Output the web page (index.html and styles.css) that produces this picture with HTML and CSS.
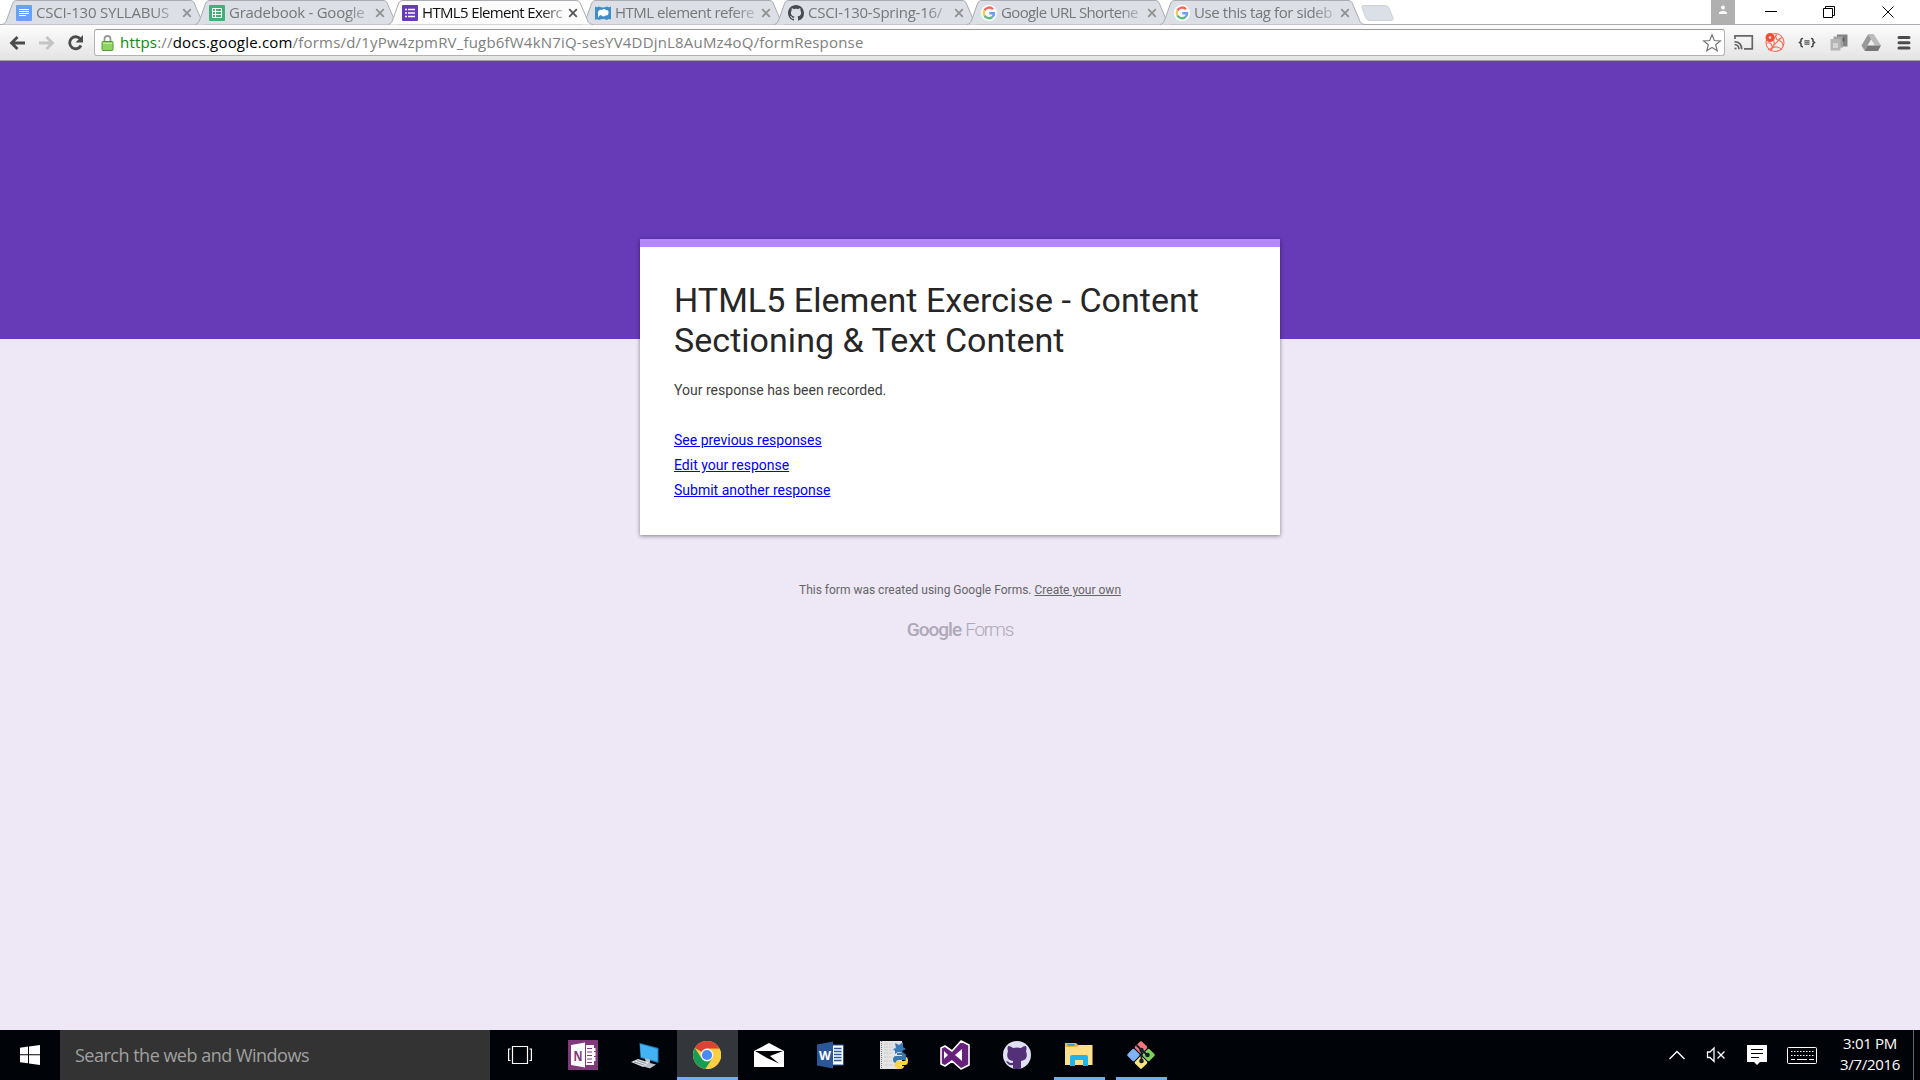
FILE: index.html
```html
<!DOCTYPE html>
<html lang="en">
<head>
<meta charset="utf-8">
<title>HTML5 Element Exercise - Content Sectioning &amp; Text Content</title>
<link rel="stylesheet" href="styles.css">
</head>
<body>
<svg class="defs" width="0" height="0" aria-hidden="true">
  <defs>
    <symbol id="tab" viewBox="0 0 206 25"><path d="M0 24.5C3 24 4 22 5 19L10 5C11 2 12 .5 15 .5H188C191 .5 192 2 193 5L199 19C200 22 201 24 205 24.5"/></symbol>
    <symbol id="x" viewBox="0 0 10 10"><path d="M1.2 1.2 8.8 8.8M8.8 1.2 1.2 8.8" stroke="currentColor" stroke-width="1.8"/></symbol>
    <symbol id="g" viewBox="0 0 16 16"><circle cx="8" cy="8" r="8" fill="#fff"/><g fill="none" stroke-width="2.4"><path d="M12 4.3A5.2 5.2 0 0 0 3.4 5.6" stroke="#f0665c"/><path d="M3.4 5.6a5.2 5.2 0 0 0 0 4.9" stroke="#f8cc50"/><path d="M3.4 10.5a5.2 5.2 0 0 0 8 1.5" stroke="#5fbb78"/><path d="M11.4 12A5.2 5.2 0 0 0 13 8.2H8.3" stroke="#6c9ff7"/></g></symbol>
    <symbol id="cat" viewBox="0 0 16 16"><path d="M8 0C3.58 0 0 3.58 0 8c0 3.54 2.29 6.53 5.47 7.59.4.07.55-.17.55-.38 0-.19-.01-.82-.01-1.49-2.01.37-2.53-.49-2.69-.94-.09-.23-.48-.94-.82-1.13-.28-.15-.68-.52-.01-.53.63-.01 1.08.58 1.23.82.72 1.21 1.87.87 2.33.66.07-.52.28-.87.51-1.07-1.78-.2-3.64-.89-3.64-3.95 0-.87.31-1.59.82-2.15-.08-.2-.36-1.02.08-2.12 0 0 .67-.21 2.2.82.64-.18 1.32-.27 2-.27s1.36.09 2 .27c1.53-1.04 2.2-.82 2.2-.82.44 1.1.16 1.92.08 2.12.51.56.82 1.27.82 2.15 0 3.07-1.87 3.75-3.65 3.95.29.25.54.73.54 1.48 0 1.07-.01 1.93-.01 2.2 0 .21.15.46.55.38A8.01 8.01 0 0 0 16 8c0-4.42-3.58-8-8-8z"/></symbol>
  </defs>
</svg>

<header class="strip">
  <div class="tabs">
    <div class="tab"><svg class="shape"><use href="#tab"/></svg>
      <svg class="fav" viewBox="0 0 16 16"><rect width="16" height="16" rx="1" fill="#6a9ff5"/><path d="M3 4.500h10M3 6.500h10M3 8.500h10M3 10.500h7" stroke="#fff"/></svg>
      <span class="name t1">CSCI-130 SYLLABUS</span><svg class="close"><use href="#x"/></svg></div>
    <div class="tab"><svg class="shape"><use href="#tab"/></svg>
      <svg class="fav" viewBox="0 0 16 16"><rect width="16" height="16" rx="1" fill="#43b079"/><path d="M3.500 3.500h9v9h-9zM3.500 6.500h9M3.500 9.500h9M6.500 3.500v9" fill="none" stroke="#fff"/></svg>
      <span class="name t2">Gradebook - Google</span><svg class="close"><use href="#x"/></svg></div>
    <div class="tab active"><svg class="shape"><use href="#tab"/></svg>
      <svg class="fav" viewBox="0 0 16 16"><rect width="16" height="16" rx="1" fill="#673ab7"/><path d="M3 4.500h2M6 4.500h7M3 8h2M6 8h7M3 11.500h2M6 11.500h7" stroke="#fff" stroke-width="1.600"/></svg>
      <span class="name t3">HTML5 Element Exerc</span><svg class="close"><use href="#x"/></svg></div>
    <div class="tab"><svg class="shape"><use href="#tab"/></svg>
      <svg class="fav" viewBox="0 0 16 16"><path d="M0 1.500q2 1.500 4 0 4 2 8 0 2 1.500 4 0v13q-2-1-4 .5-4-2-8 0-2-1.500-4 0z" fill="#3f8fc6"/><path d="M3 13V7q1-3 4-2 2-2 4 0 3 0 2.500 3 0 3-3 2.500Q8 12.500 6 10q-2 0-3 3z" fill="#fff"/></svg>
      <span class="name t4">HTML element refere</span><svg class="close"><use href="#x"/></svg></div>
    <div class="tab"><svg class="shape"><use href="#tab"/></svg>
      <svg class="fav" fill="#484b50"><use href="#cat"/></svg>
      <span class="name t5">CSCI-130-Spring-16/</span><svg class="close"><use href="#x"/></svg></div>
    <div class="tab"><svg class="shape"><use href="#tab"/></svg>
      <svg class="fav"><use href="#g"/></svg>
      <span class="name t6">Google URL Shortene</span><svg class="close"><use href="#x"/></svg></div>
    <div class="tab"><svg class="shape"><use href="#tab"/></svg>
      <svg class="fav"><use href="#g"/></svg>
      <span class="name t7">Use this tag for sideb</span><svg class="close"><use href="#x"/></svg></div>
  </div>
  <svg class="newtab" viewBox="0 0 34 16"><path d="M3 .5H24Q27 .5 28 3L32 13Q33 15.500 30 15.500H9Q6 15.500 5 13L1 3Q0 .5 3 .5z" fill="#dae0e6" stroke="#cdd2d8"/></svg>
  <div class="profile"><svg width="10" height="10" viewBox="0 0 10 10" fill="#fff"><circle cx="5" cy="2.500" r="2"/><path d="M1 9V7.500Q5 4 9 7.500V9z"/></svg></div>
  <svg class="winbtns" width="185" height="24" fill="none" stroke="#000"><path d="M30 11.500h12M88.500 8.500h9v9h-9zM90.500 8.500V6.500h9v9h-2M147.500 6.500l11 11M158.500 6.500l-11 11"/></svg>
</header>

<div class="toolbar">
  <svg class="nav" width="94" height="35" fill="none" stroke-width="2.800"><path d="M25 18H12M17.500 12l-6 6 6 6" stroke="#4c4c4c"/><path d="M39 18h13M46.500 12l6 6-6 6" stroke="#c4c4c4"/><path d="M80.500 14.200A6 6 0 1 0 81 20.500" stroke="#4c4c4c"/><path d="M83 10v7.500h-7.500z" fill="#4c4c4c" stroke="none"/></svg>
  <div class="omnibox">
    <svg class="lock" width="13" height="16" viewBox="0 0 13 16"><path d="M3.500 8V4a3 3 0 0 1 6 0v4" fill="none" stroke="#999" stroke-width="1.800"/><rect x="1" y="6.500" width="11" height="9" rx="1" fill="#8fd460" stroke="#55993a"/><path d="M2 8.500h9" stroke="#bceb9b"/></svg>
    <span class="url"><b>https</b>://<i>docs.google.com</i>/forms/d/1yPw4zpmRV_fugb6fW4kN7iQ-sesYV4DDjnL8AuMz4oQ/formResponse</span>
    <svg class="star" width="20" height="20" viewBox="0 0 20 20"><path d="M10 1.800l2.300 5.700 6.100.4-4.700 3.900 1.500 6L10 14.500l-5.200 3.300 1.500-6L1.600 7.900l6.100-.4z" fill="#fff" stroke="#777" stroke-width="1.200"/></svg>
  </div>
  <svg class="ext" width="194" height="35" viewBox="1725 25 194 35">
    <g fill="none" stroke="#666" stroke-width="1.700"><path d="M1735 39v-3.200h17.300v13H1744M1734.500 41.700q7 .3 7.200 7.500M1734.500 44.500q4.300.3 4.500 4.700"/><path d="M1734.500 48.500h2"/></g>
    <g fill="none" stroke="#f2705c" stroke-width="1.100"><circle cx="1775" cy="42.500" r="9"/><path d="M1768 50q7-3 6-8t3-7M1770 51q3-5 7-4t5 3M1776 34.500q-1 5 3 6t4 6M1767 43q4-1 5 3t-2 5M1778 41q2-4 4-3M1773 46l8-8"/><circle cx="1770" cy="37.500" r="2.900" fill="#fae3de" stroke="#f04e35" stroke-width="3.200"/></g>
    <path d="M1803 38.500q-2-.2-2 1.500v1.300l-1.500 1.200 1.500 1.200v1.500q0 1.700 2 1.500M1811 38.500q2-.2 2 1.500v1.300l1.500 1.200-1.500 1.200v1.500q0 1.700-2 1.500" fill="none" stroke="#444" stroke-width="1.500"/><path d="M1804.500 40h5v5h-5z" fill="#777"/><path d="M1804 41.500h6M1804 43.500h6" stroke="#bbb" stroke-width=".6"/>
    <path d="M1837 34.500h10.500v12h-10.500z" fill="#838383"/><path d="M1833.500 36.500h9.500v11h-9.500z" fill="#a3a3a3"/><path d="M1830.500 39h10v11.500h-10z" fill="#b5b5b5"/><path d="M1833 43h5v5h-5z" fill="#d4d4d4"/><path d="M1843.500 37.500v4" stroke="#5f5f5f" stroke-width="2"/>
    <path d="M1868 34.500h6l-6.500 11-3 5-3-5z" fill="#999"/><path d="M1868 34.500h6l7 11h-6z" fill="#bbb"/><path d="M1867.500 45.500H1881l-3 5.500h-13.500z" fill="#777"/>
    <path d="M1899 37.500h10M1899 42.700h10M1899 47.900h10" stroke="#4c4c4c" stroke-width="3" stroke-linecap="round"/>
  </svg>
</div>

<main class="page">
  <section class="card">
    <h1>HTML5 Element Exercise - Content Sectioning &amp; Text Content</h1>
    <p>Your response has been recorded.</p>
    <nav><a href="#">See previous responses</a><a href="#">Edit your response</a><a href="#">Submit another response</a></nav>
  </section>
  <p class="made">This form was created using Google Forms. <a href="#">Create your own</a></p>
  <div class="logo"><span class="google">Google</span><span class="forms">Forms</span></div>
</main>

<footer class="taskbar">
  <div class="start"><svg width="20" height="20" viewBox="0 0 20 20" fill="#fff"><path d="M0 2.700l8-1.100v7.700H0zM9 1.400L20 0v9.300H9zM0 10.300h8v8L0 17.200zM9 10.300h11V20L9 18.500z"/></svg></div>
  <div class="search"><span>Search the web and Windows</span></div>
  <div class="apps">
    <div class="app"><svg width="26" height="20" viewBox="0 0 26 20" fill="none" stroke="#fff" stroke-width="1.200"><path d="M4.500 1.500h15v17h-15zM2.500 4H.6v11.500h1.900M21.500 4h1.900v11.500h-1.900"/></svg></div>
    <div class="app"><svg width="30" height="30" viewBox="0 0 30 30"><path d="M0 0h30v30H0z" fill="#80397b"/><path d="M3 5l14-2.500v25L3 25zM18 5h8v3h1.500v3H26v1h1.500v4H26v1h1.500v4H26v4h-8z" fill="#fff"/><path d="M19 8.500h5M19 12h5M19 15.500h5M19 19h5M19 22.500h5" stroke="#80397b"/><text x="5.500" y="20.500" font-size="15" font-weight="700" fill="#80397b" textLength="9" lengthAdjust="spacingAndGlyphs">N</text></svg></div>
    <div class="app"><svg width="30" height="30" viewBox="0 0 30 30"><path d="M9.500 3l19 5v15l-18-5z" fill="#247db5"/><path d="M10 4l17.500 5v12.500L11 17z" fill="#42b4f5"/><path d="M15 18l5 1.500v3.500l6 1.500-6 4-8-2.500 4-2z" fill="#b9c2c8"/><path d="M1 22l7-3 11 3.500L13 27z" fill="#dce1e4"/><path d="M4 22l10 3M7 20.500l9 3" stroke="#8a969d"/></svg></div>
    <div class="app current"><svg width="28" height="28" viewBox="0 0 28 28"><circle cx="14" cy="14" r="14" fill="#ffce43"/><path d="M14 14L1.900 7A14 14 0 0 1 26.500 7.700H14z" fill="#da4436"/><path d="M1.900 7A14 14 0 0 0 12.500 27.900L19.500 17.200 14 14 8.500 17.200z" fill="#179c57"/><path d="M14 7.700h12.500A14 14 0 0 1 12.500 28l7-10.800z" fill="#ffce43"/><circle cx="14" cy="14" r="6.400" fill="#f4f4f4"/><circle cx="14" cy="14" r="5.100" fill="#4a8af4"/></svg></div>
    <div class="app"><svg width="30" height="26" viewBox="0 0 30 26"><path d="M0 9L15 1l15 8v16H0z" fill="#fff"/><path d="M1 9h28l-13 5 9 7.500-12-5.500z" fill="#000308"/></svg></div>
    <div class="app"><svg width="28" height="28" viewBox="0 0 28 28"><path d="M15 4h11.500v20H15z" fill="#fff" stroke="#2b5797"/><path d="M17 7.500h7.500M17 10.500h7.500M17 13.500h7.500M17 16.500h7.500M17 19.500h7.500" stroke="#2b5797" stroke-width="1.400"/><path d="M0 3.500L16 .5v27l-16-3z" fill="#2b5797"/><text x="2" y="18.500" font-size="13" font-weight="700" fill="#fff" textLength="12" lengthAdjust="spacingAndGlyphs">W</text></svg></div>
    <div class="app"><svg width="30" height="30" viewBox="0 0 30 30"><path d="M2 1h22v26l-3 2H2z" fill="#e4e4e4"/><path d="M3.500 1v28" stroke="#777" stroke-dasharray="1 1"/><path d="M6 4h15M6 7h13M6 10h14M6 13h8M6 17h7M6 21h8M6 25h12" stroke="#ccc" stroke-dasharray="4 1"/><path d="M17 3l4 2 4-3v5l3 2-4 2 2 2-6-1-3 2v-3l-2-2 3-1z" fill="#367bb5"/><path d="M19 13h6q3 0 3 3v4h-7q-3 0-3 3-3 0-3-3.500t3-3.500h6v-1h-5z" fill="#3979ae"/><path d="M28 17q2 0 2 4t-3 4h-5v1h4q0 3-4 3-5 0-5-3v-2q0-3 4-3h5q2 0 2-2z" fill="#ffd343"/></svg></div>
    <div class="app"><svg width="30" height="30" viewBox="0 0 30 30"><path d="M21 1l8 4v20l-8 4-9-8-7 5-4-2V8l4-2 7 5z" fill="#68217a" stroke="#fff" stroke-width="1.600" stroke-linejoin="round"/><path d="M22 9v12l-7-6zM4 11l4 4-4 4z" fill="#fff"/></svg></div>
    <div class="app"><svg width="28" height="28" viewBox="0 0 28 28"><circle cx="14" cy="14" r="14" fill="#dfe0f2"/><path d="M5 5q3 0 5 2 4-1 8 0 2-2 5-2 1 3 0 5 3 9-5 10v7.500q-4 1-8 0V24q-5 1-7-4 2 0 4 2l3-.3V20Q2 19 5 10q-1-2 0-5z" fill="#533078"/></svg></div>
    <div class="app open"><svg width="28" height="26" viewBox="0 0 28 26"><path d="M0 1h11l2 2h14v4H0z" fill="#e9b84a"/><path d="M2.500 2h7v2h-7z" fill="#2ca7e0"/><path d="M0 5h12l2-2h13.500v20H0z" fill="#fee08b"/><path d="M5 24V15q0-2 2-2h14q2 0 2 2v9h-5v-6h-8v6z" fill="#1eb5ee"/></svg></div>
    <div class="app open"><svg width="30" height="30" viewBox="0 0 30 30"><g transform="rotate(45 15 15)"><rect x="4.800" y="4.800" width="9.700" height="9.700" rx="1.500" fill="#f6767d"/><rect x="4.800" y="15.500" width="9.700" height="9.700" rx="1.500" fill="#80b3ff"/><rect x="15.500" y="4.800" width="9.700" height="9.700" rx="1.500" fill="#80d25b"/><rect x="15.500" y="15.500" width="9.700" height="9.700" rx="1.500" fill="#ffe57f"/></g><path d="M10 4.500l5.500 5.500v11M15.500 10l6 5" stroke="#10202c" stroke-width="1.800" fill="none"/><circle cx="15.500" cy="10" r="2.200" fill="#10202c"/><circle cx="15.500" cy="21" r="2.300" fill="#10202c"/><circle cx="21.500" cy="15" r="2.300" fill="#10202c"/></svg></div>
  </div>
  <svg class="tray" width="160" height="50" viewBox="1660 1030 160 50" fill="none" stroke="#fff">
    <path d="M1669.500 1059l7.500-7.500 7.500 7.500" stroke-width="1.400"/>
    <path d="M1707.500 1052h2.500l4-4v13.500l-4-4h-2.500zM1717.500 1051.500l7 7M1724.500 1051.500l-7 7" stroke-width="1.300"/>
    <path d="M1747 1045h20v17h-7l-3 3-3-3h-7z" fill="#fff" stroke="none"/><path d="M1751 1049.500h12M1751 1053.500h12M1751 1057.500h8" stroke="#000"/>
    <rect x="1787.500" y="1047.500" width="29" height="16" rx="1"/><path d="M1791 1051.500h23M1791 1055.500h23" stroke-dasharray="1.500 1.500"/><path d="M1791 1059.500h4M1797 1059.500h10M1809 1059.500h5"/>
  </svg>
  <div class="clock"><span class="time">3:01 PM</span><span class="date">3/7/2016</span></div>
</footer>
</body>
</html>
```
FILE: styles.css
```css
* { box-sizing: border-box; }
body { margin: 0; width: 1920px; height: 1080px; overflow: hidden; display: flex; flex-direction: column; font-family: "Open Sans", "Noto Sans", sans-serif; background: #ede7f6; }
.defs { position: absolute; }
svg { display: block; flex: none; }

.strip { height: 24px; flex: none; display: flex; background: #fff; position: relative; z-index: 1; }
.tabs { display: flex; padding-left: 2px; }
.tab { position: relative; width: 193px; height: 24px; display: flex; align-items: center; padding-left: 14px; color: #777; }
.shape { position: absolute; left: 0; top: 0; width: 206px; height: 25px; fill: #dce0e6; stroke: #a9acb0; }
.active { z-index: 1; color: #111; }
.active .shape { fill: #fcfcfc; }
.fav { position: relative; width: 16px; height: 16px; margin-top: 1px; }
.name { position: relative; width: 144px; margin-left: 4px; font-size: 15px; line-height: 23px; white-space: nowrap; -webkit-mask-image: linear-gradient(90deg, #000 118px, rgba(0,0,0,.3) 141px); mask-image: linear-gradient(90deg, #000 118px, rgba(0,0,0,.3) 141px); letter-spacing: -.65px; }
.t1 { letter-spacing: -.2px; }
.t2, .t5 { letter-spacing: -.25px; }
.t4 { letter-spacing: -.5px; }
.t7 { letter-spacing: -.42px; }
.close { position: relative; width: 10px; height: 10px; margin: 2px 0 0 2px; color: #919191; }
.active .close { color: #555; }
.newtab { width: 34px; height: 16px; margin: 5px 0 0 8px; }
.profile { width: 24px; height: 24px; margin-left: auto; background: #b0b0b0; display: flex; justify-content: center; padding-top: 5px; }

.toolbar { height: 37px; flex: none; display: flex; align-items: flex-start; background: linear-gradient(#fcfcfc, #e4e4e4); border-top: 1px solid #a9acb0; border-bottom: 1px solid #a3a0a8; }
.omnibox { width: 1631px; height: 27px; margin-top: 4px; display: flex; align-items: center; background: #fff; border: 1px solid #b3b3b3; border-top-color: #999; border-radius: 3px; padding: 0 2px 0 6px; }
.url { margin: -2px 0 0 6px; font-size: 15px; line-height: 24px; white-space: nowrap; color: #808080; letter-spacing: .19px; }
.url b { font-weight: 400; color: #0b8a0b; }
.url i { font-style: normal; color: #000; }
.star { margin-left: auto; }

.page { flex: 1; display: flex; flex-direction: column; align-items: center; padding-top: 178px; background: linear-gradient(#673ab7 278px, #ede7f6 278px); font-family: Roboto, sans-serif; }
.card { width: 640px; height: 296px; background: #fff; border-top: 8px solid #b388ff; box-shadow: 0 1px 4px rgba(0,0,0,.45); padding: 33px 34px 0; }
h1 { margin: 0; font-size: 34px; line-height: 40px; font-weight: 400; color: #262626; letter-spacing: .04px; }
p { margin: 0; }
.card p { margin-top: 20px; font-size: 14px; line-height: 20px; color: #404040; letter-spacing: .02px; }
nav { margin-top: 28px; display: flex; flex-direction: column; align-items: flex-start; font-size: 14px; line-height: 25px; }
nav a { color: #00e; }
.made { margin-top: 47px; font-size: 12px; line-height: 16px; color: #666; }
.made a { color: inherit; }
.logo { margin-top: 20px; display: flex; gap: 4px; font-size: 19px; line-height: 24px; color: #aea8b8; }
.google { font-weight: 500; letter-spacing: -1px; }
.forms { letter-spacing: -1.2px; font-weight: 300; }

.taskbar { height: 50px; flex: none; display: flex; background: #000308; }
.start { width: 60px; display: flex; align-items: center; justify-content: center; }
.search { width: 430px; background: #333; color: #a0a0a0; padding-left: 15px; font-size: 18px; line-height: 51px; white-space: nowrap; letter-spacing: -.5px; }
.apps { display: flex; }
.app { width: 62px; height: 50px; display: flex; align-items: center; justify-content: center; border: solid transparent; border-width: 0 5px; }
.current { width: 61px; margin-left: 1px; border-width: 0; padding-right: 2px; background: linear-gradient(#33363a 47px, #76aaf8 47px); }
.open { border-width: 0 5px 0 6px; padding-right: 2px; background: linear-gradient(transparent 47px, #76aaf8 47px) padding-box; }
.tray { margin-left: 488px; }
.clock { width: 94px; padding: 3px 0 0 7px; border-right: 1px solid #666; display: flex; flex-direction: column; align-items: center; color: #fff; font-size: 15px; line-height: 21px; letter-spacing: -.3px; }
```
